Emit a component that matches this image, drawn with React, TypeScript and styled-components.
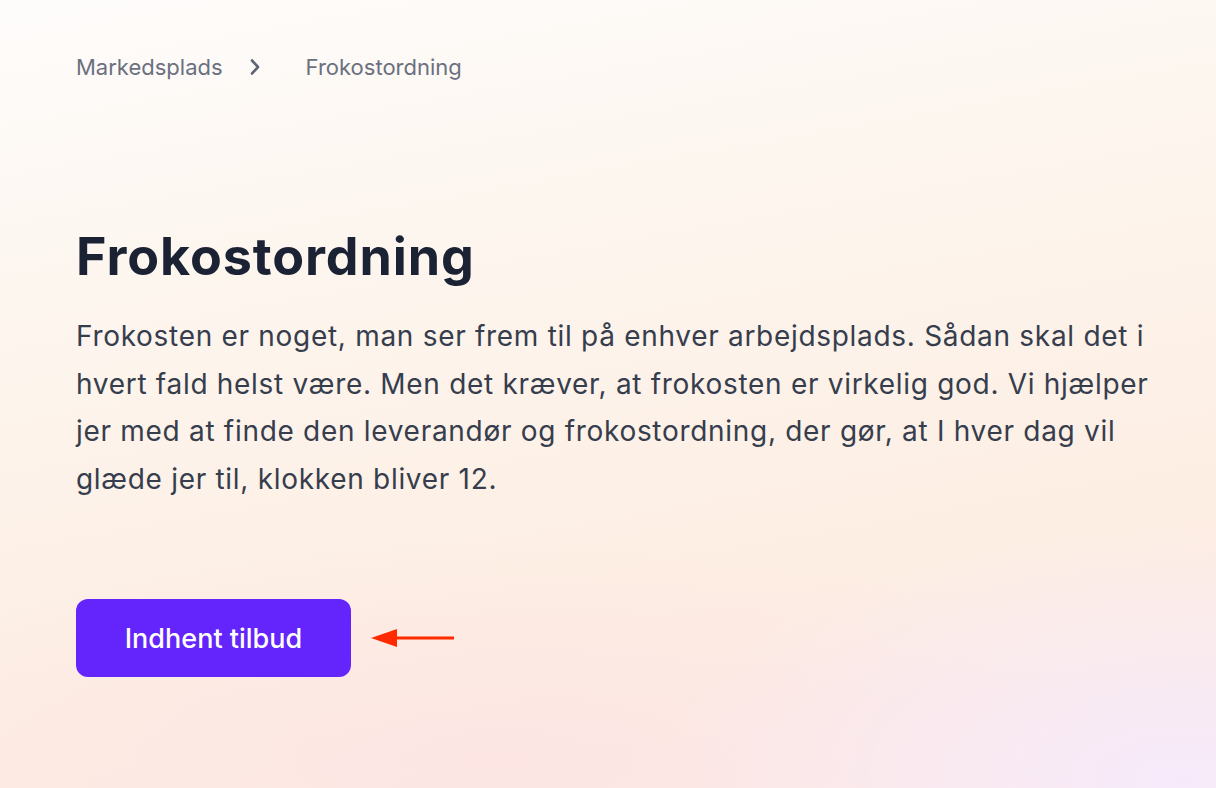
import * as React from "react"
import styled, { createGlobalStyle } from "styled-components"

const GlobalStyle = createGlobalStyle`
  html, body {
    margin: 0;
    padding: 0;
  }
  body {
    font-family: Inter, "Noto Sans", sans-serif;
  }
`

const Page = styled.div`
  width: 1216px;
  height: 788px;
  overflow: hidden;
  box-sizing: border-box;
  padding: 51px 40px 0 76px;
  background:
    radial-gradient(ellipse 520px 260px at 1180px 780px, rgba(246, 234, 252, 0.95), rgba(246, 234, 252, 0) 100%),
    radial-gradient(ellipse 700px 220px at 500px 760px, rgba(252, 228, 228, 0.8), rgba(252, 228, 228, 0) 100%),
    linear-gradient(170deg, #fefcfb 0%, #fdf6ef 30%, #fdeee3 70%, #fde9e2 100%);
`

const Crumbs = styled.nav`
  display: flex;
  align-items: center;
  height: 32px;
  font-size: 22px;
  color: #6b7080;
`

const Crumb = styled.span``

const Sep = styled.span`
  display: flex;
  align-items: center;
  margin: 0 45px 0 26px;
  color: #5f6474;
`

const Title = styled.h1`
  margin: 142px 0 0 0;
  font-size: 52px;
  line-height: 64px;
  font-weight: 700;
  color: #1a2233;
  letter-spacing: 0.9px;
`

const Lead = styled.p`
  margin: 24px 0 0 0;
  max-width: 1090px;
  font-size: 28px;
  line-height: 47.5px;
  letter-spacing: 0.7px;
  color: #363d4d;
`

const Actions = styled.div`
  display: flex;
  align-items: center;
  gap: 20px;
  margin-top: 96px;
`

const Cta = styled.button`
  width: 275px;
  height: 78px;
  border: none;
  border-radius: 12px;
  background: #6325fb;
  color: #ffffff;
  font-family: inherit;
  font-size: 27px;
  font-weight: 500;
  cursor: pointer;
`

function Chevron() {
  return (
    <svg width="12" height="18" viewBox="0 0 12 18" fill="none">
      <path d="M3 2.5 L9 9 L3 15.5" stroke="currentColor" strokeWidth="2.6" strokeLinecap="round" strokeLinejoin="round" />
    </svg>
  )
}

function RedArrow() {
  return (
    <svg width="84" height="24" viewBox="0 0 84 24">
      <path d="M0 12 L26 3 L26 10.5 L83 10.5 L83 13.5 L26 13.5 L26 21 Z" fill="#ff2a00" />
    </svg>
  )
}

export default function App() {
  return (
    <>
      <GlobalStyle />
      <Page>
        <Crumbs>
          <Crumb>Markedsplads</Crumb>
          <Sep>
            <Chevron />
          </Sep>
          <Crumb>Frokostordning</Crumb>
        </Crumbs>
        <Title>Frokostordning</Title>
        <Lead>
          Frokosten er noget, man ser frem til på enhver arbejdsplads. Sådan skal det i hvert fald helst være. Men det
          kræver, at frokosten er virkelig god. Vi hjælper jer med at finde den leverandør og frokostordning, der gør, at
          I hver dag vil glæde jer til, klokken bliver 12.
        </Lead>
        <Actions>
          <Cta>Indhent tilbud</Cta>
          <RedArrow />
        </Actions>
      </Page>
    </>
  )
}
